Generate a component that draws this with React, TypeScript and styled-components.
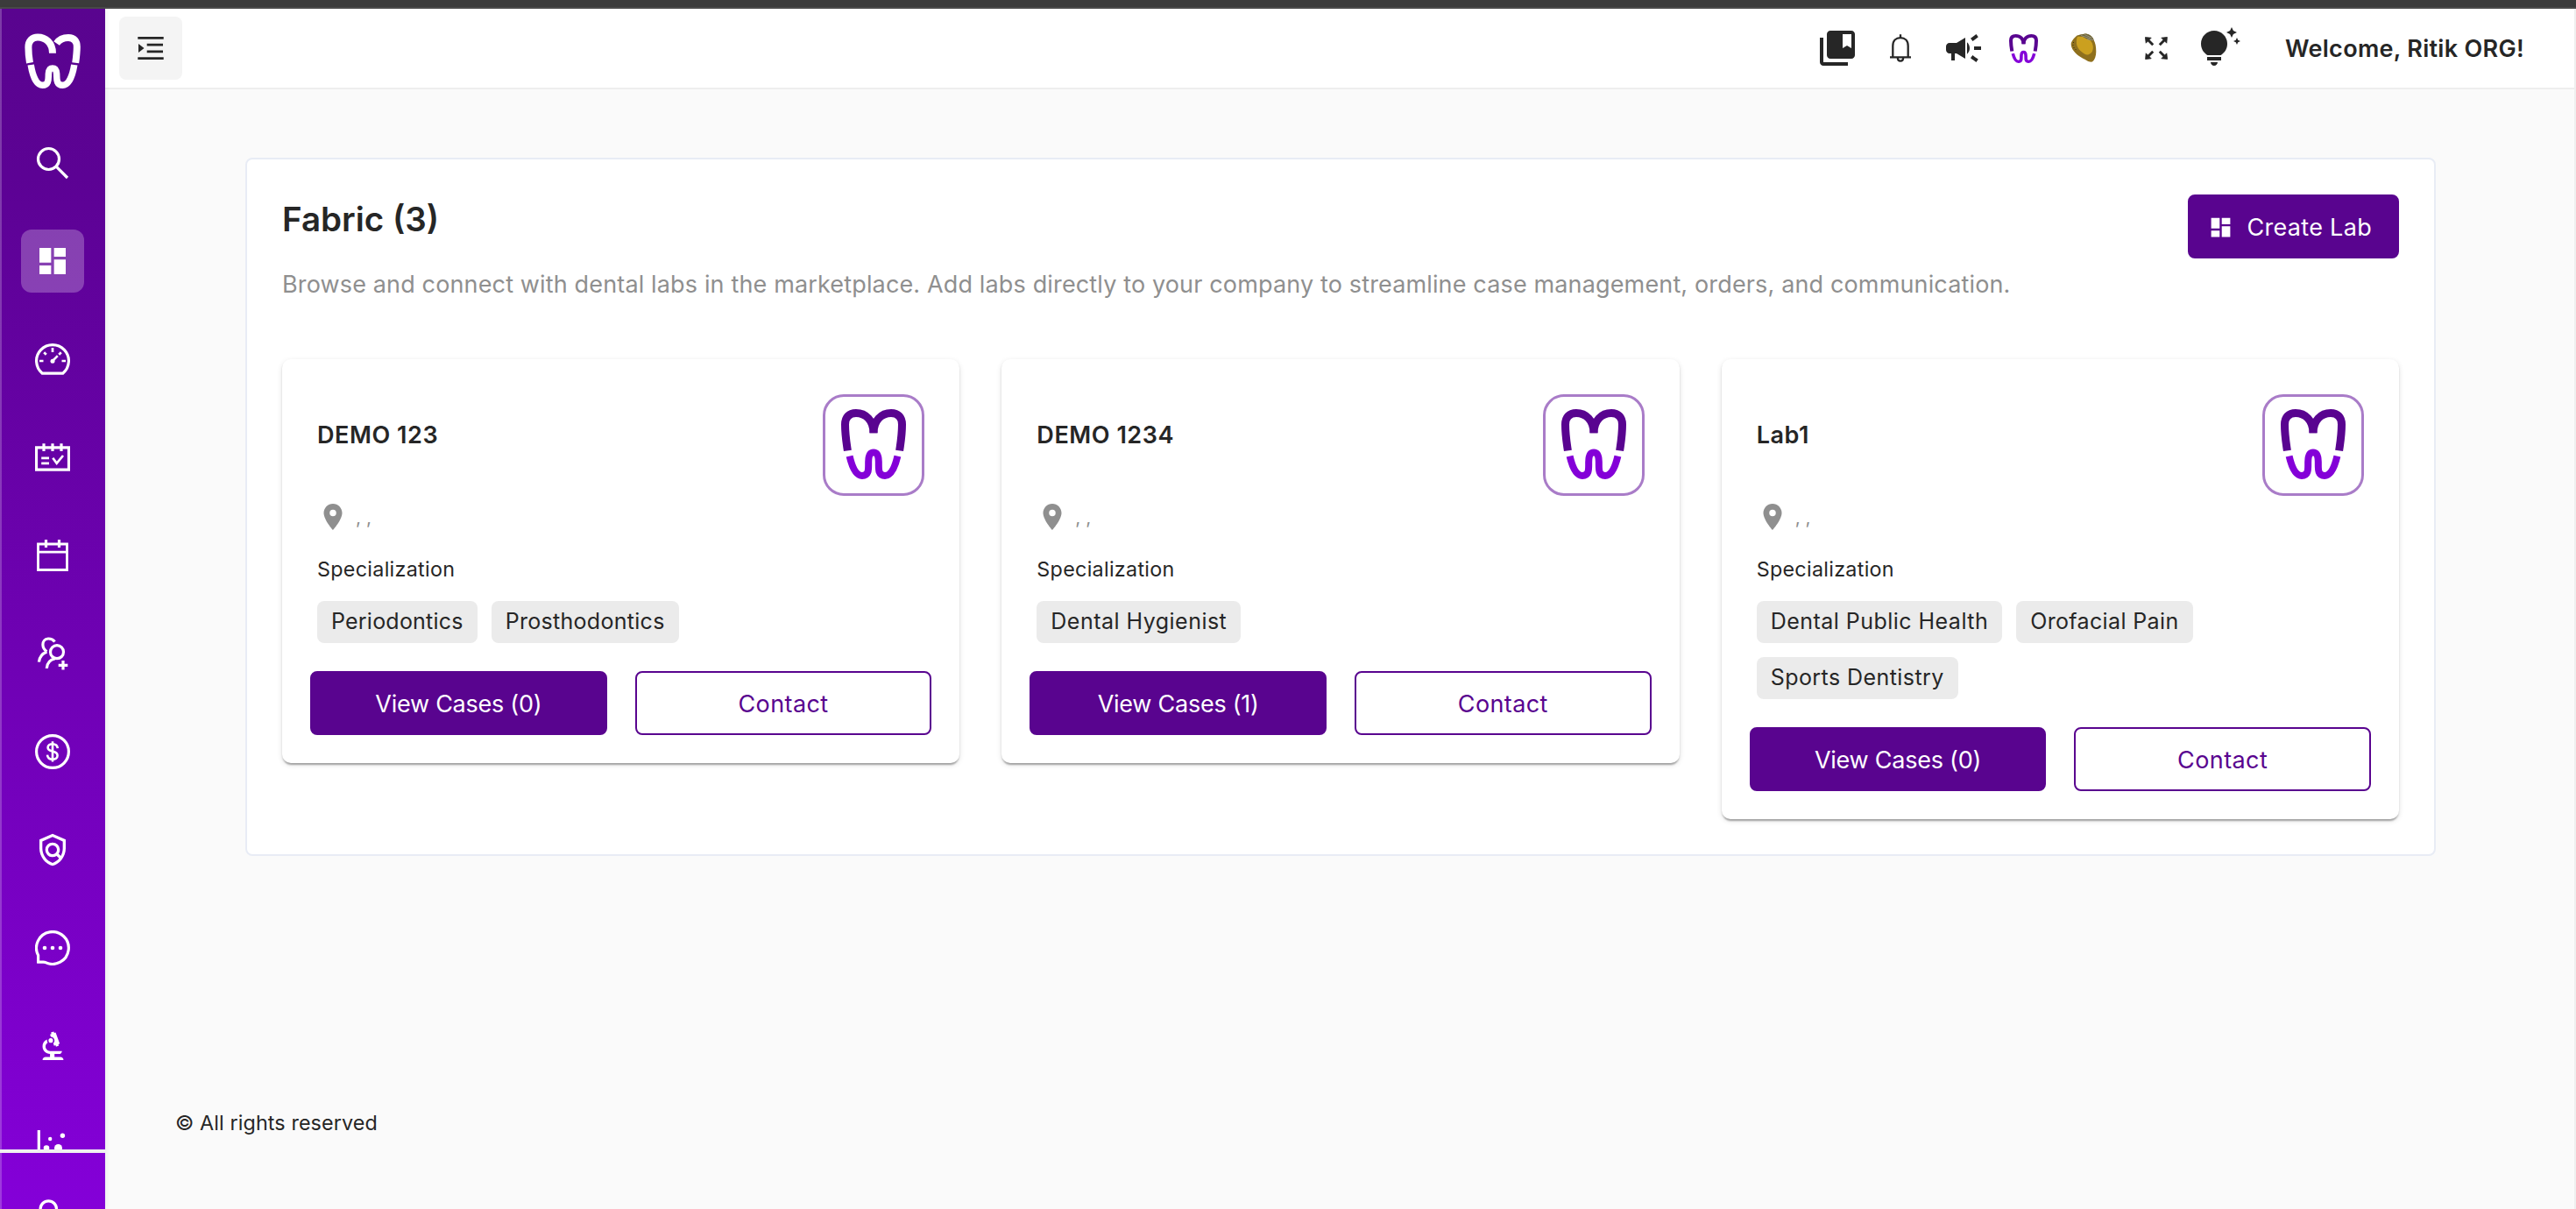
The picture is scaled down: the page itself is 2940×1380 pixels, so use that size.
import React from "react";
import styled, { createGlobalStyle, css } from "styled-components";
import {
  MdCampaign,
  MdCollectionsBookmark,
  MdDashboard,
  MdBiotech,
  MdLocationOn,
  MdOutlinePolicy,
  MdTipsAndUpdates,
} from "react-icons/md";

const brand = "#59048f";
const ink = "#262626";
const muted = "#8f8f8f";

const GlobalStyle = createGlobalStyle`
  *, *::before, *::after { box-sizing: border-box; }
  html, body { margin: 0; background: #fafafa; }
  body { font-family: Inter, "Open Sans", sans-serif; color: ${ink}; }
  svg { display: block; flex: none; }
  h1, h2, p { margin: 0; font-weight: 400; }
  button { font: inherit; margin: 0; cursor: pointer; }
`;

const Page = styled.div`
  display: flex;
  flex-direction: column;
  width: 100%;
  height: 1380px;
  overflow: hidden;
`;

const WindowEdge = styled.div`
  flex: none;
  height: 10px;
  background: #3b3b3b;
  border-bottom: 2px solid #4a4a4a;
`;

const Shell = styled.div`
  flex: 1;
  min-height: 0;
  display: flex;
`;

/* ---------- sidebar ---------- */

const Sidebar = styled.aside`
  position: relative;
  flex: none;
  width: 120px;
  display: flex;
  flex-direction: column;
  background: linear-gradient(180deg, #59048f 0%, #5c0294 14%, #8400d8 100%);
  box-shadow: inset 2px 0 rgba(255, 255, 255, 0.22), 2px 0 6px rgba(0, 0, 0, 0.05);
`;

const Brand = styled.div`
  flex: none;
  display: flex;
  justify-content: center;
  padding: 28px 0 48px;
`;

const Nav = styled.nav`
  flex: 1;
  min-height: 0;
  overflow: hidden;
  display: flex;
  flex-direction: column;
  align-items: center;
  gap: 40px;
`;

const NavItem = styled.a<{ $active?: boolean }>`
  flex: none;
  width: 72px;
  height: 72px;
  display: flex;
  align-items: center;
  justify-content: center;
  border-radius: 12px;
  color: #fff;
  ${(p) => p.$active && css`background: rgba(255, 255, 255, 0.25);`}
`;

const NavFooter = styled.div`
  flex: none;
  height: 68px;
  overflow: hidden;
  display: flex;
  justify-content: center;
  padding-top: 51px;
  border-top: 4px solid #f0f0f0;
  color: #fff;
`;

/* ---------- header ---------- */

const Content = styled.div`
  flex: 1;
  min-width: 0;
  display: flex;
  flex-direction: column;
  border-right: 2px solid #efefef;
`;

const Header = styled.header`
  flex: none;
  height: 92px;
  display: flex;
  align-items: center;
  justify-content: space-between;
  padding: 0 59px 0 16px;
  background: #fff;
  border-bottom: 2px solid #eeeeee;
`;

const MenuButton = styled.button`
  width: 72px;
  height: 72px;
  display: flex;
  align-items: center;
  justify-content: center;
  padding: 0;
  border: 0;
  border-radius: 8px;
  background: #f4f4f4;
  color: ${ink};
`;

const HeaderActions = styled.div`
  display: flex;
  align-items: center;
`;

const Action = styled.span<{ $width: number }>`
  width: ${(p) => p.$width}px;
  height: 48px;
  display: flex;
  align-items: center;
  justify-content: center;
`;

const Welcome = styled.span`
  width: 271px;
  margin-left: 49px;
  padding-top: 1px;
  font-size: 27px;
  line-height: 36px;
  font-weight: 560;
  letter-spacing: 0.3px;
  white-space: nowrap;
`;

/* ---------- main ---------- */

const Main = styled.main`
  flex: 1;
  min-height: 0;
  display: flex;
  flex-direction: column;
  padding: 78px 158px 82px 160px;
`;

const Panel = styled.section`
  padding: 40px;
  background: #fff;
  border: 2px solid #e8ecf5;
  border-radius: 8px;
`;

const PanelHead = styled.div`
  display: flex;
  justify-content: space-between;
  align-items: flex-start;
  margin-bottom: 67px;
`;

const Title = styled.h1`
  margin-bottom: 29px;
  font-size: 38.5px;
  line-height: 56px;
  font-weight: 560;
`;

const Subtitle = styled.p`
  font-size: 27px;
  line-height: 36px;
  letter-spacing: 0.145px;
  color: ${muted};
`;

const Button = styled.button<{ $outline?: boolean; $tracking?: number }>`
  height: 73px;
  display: flex;
  align-items: center;
  justify-content: center;
  gap: 16px;
  padding: 1px 33px 0 23px;
  border: 2px solid ${brand};
  border-radius: 8px;
  background: ${(p) => (p.$outline ? "#fff" : brand)};
  color: ${(p) => (p.$outline ? brand : "#fff")};
  font-size: 27px;
  line-height: 36px;
  letter-spacing: ${(p) => p.$tracking ?? 0}px;
  white-space: nowrap;
`;

const CreateButton = styled(Button)`
  padding: 2px 29px 0 21px;
`;

const LabGrid = styled.div`
  display: grid;
  grid-template-columns: repeat(3, 1fr);
  align-items: start;
  gap: 48px;
`;

const Card = styled.article`
  padding: 40px 32px 32px;
  background: #fff;
  border-radius: 10px;
  box-shadow: 0 4px 2px -2px rgba(0, 0, 0, 0.2), 0 2px 2px rgba(0, 0, 0, 0.14),
    0 2px 6px rgba(0, 0, 0, 0.12);
`;

const CardBody = styled.div`
  padding: 0 8px;
`;

const CardTop = styled.div`
  display: flex;
  justify-content: space-between;
  align-items: flex-start;
`;

const LabName = styled.h2`
  padding-top: 29px;
  font-size: 27px;
  line-height: 36px;
  font-weight: 570;
  letter-spacing: 0.55px;
`;

const LogoBox = styled.div`
  width: 116px;
  height: 116px;
  display: flex;
  justify-content: center;
  padding-top: 14px;
  border: 3px solid #a97cc8;
  border-radius: 24px;
`;

const Location = styled.div`
  display: flex;
  align-items: center;
  gap: 8px;
  height: 36px;
  margin-top: 6px;
  font-size: 21px;
  color: ${muted};
`;

const Label = styled.p`
  margin-top: 26px;
  font-size: 23.3px;
  line-height: 32px;
  letter-spacing: 0.3px;
`;

const Chips = styled.div`
  display: flex;
  flex-wrap: wrap;
  gap: 16px;
  margin: 20px 0 32px;
`;

const Chip = styled.span<{ $tracking: number }>`
  height: 48px;
  padding: 0 16px 2px;
  border-radius: 8px;
  background: #ebebeb;
  font-size: 25px;
  line-height: 46px;
  letter-spacing: ${(p) => p.$tracking}px;
`;

const CardActions = styled.div`
  display: grid;
  grid-template-columns: 1fr 1fr;
  gap: 32px;

  ${Button} {
    padding: 2px 0 0;
  }
`;

const Footer = styled.footer`
  margin: auto 0 0 -80px;
  font-size: 23.3px;
  line-height: 33px;
  letter-spacing: 0.12px;
`;

/* ---------- drawings ---------- */

const LineIcon = ({ children, size = 40, stroke = 3.2 }: { children: React.ReactNode; size?: number; stroke?: number }) => (
  <svg width={size} height={size} viewBox="0 0 40 40" fill="none" stroke="currentColor" strokeWidth={stroke}>
    {children}
  </svg>
);

const WhiteTooth = () => (
  <svg width="64" height="64" viewBox="0 0 64 64" fill="none" stroke="#fff" strokeWidth="8">
    <path d="M6 33.7C5 28 4.4 22 4.4 16C4.4 8.5 9 4.4 15 4.4C24 4.4 32 11 32 22.7" />
    <path d="M36.6 11.5C40 6.5 44.5 5 50 5C56.5 5 59.8 8.5 59.8 15.5C59.8 22 59 28 58.2 33.7" />
    <path d="M7.2 36C9 47 13 59.3 20.5 59.3C28.5 59.3 27 51 27.4 46C27.8 41.5 29 40 32 40C35 40 36.2 41.5 36.6 46C37 51 35.5 59.3 43.5 59.3C51 59.3 55 47 56.8 36" strokeWidth="7.5" />
  </svg>
);

const Tooth = ({ width, height }: { width: number; height: number }) => (
  <svg width={width} height={height} viewBox="0 0 74 80" preserveAspectRatio="none" fill="none" strokeWidth="9">
    <g stroke="#590490">
      <path d="M7.4 47.4C5.6 36 4.5 26 4.5 17.5C4.5 9 9 4.5 17 4.5C28 4.5 37 13 37 27.3" />
      <path d="M66.6 47.4C68.400 36 69.5 26 69.5 17.5C69.5 9 65 4.5 57 4.5C46 4.5 37 13 37 27.3" />
    </g>
    <path
      stroke="#8400d8"
      strokeWidth="8"
      d="M9.6 53.7C12 64 16 76 24 76C32.5 76 31 67 31.2 60C31.4 52 33 49.6 37 49.6C41 49.6 42.6 52 42.8 60C43 67 41.5 76 50 76C58 76 62 64 64.4 53.7"
    />
  </svg>
);

const Mango = () => (
  <svg width="30" height="34" viewBox="0 0 30 34">
    <path d="M7.5 2.5L17 .5C22 1 25 3.5 26.5 7.5C28.5 11 29.3 15 29.3 21C29.2 26 28 30 25 32.6C22.5 33 20.5 32.2 18.5 31C13 28 7 25 4 20.5C1.5 17.5 .3 14 .8 11C2 8 4.5 5 7.5 2.5Z" fill="#8f701d" />
    <path d="M8 4C13 3 19 5 23 8.5C26 12 26.5 17 25 20.5C23 24 19.5 25.5 16 23.5C11 20.5 7.5 16.5 7 11.5C6.8 8.5 7 6 8 4Z" fill="#cba01f" />
    <path d="M8 2.3L17 .4C22 .8 26 4 26.8 8.2C22 8 18 6.5 14.5 4C12 3 10 2.8 8 2.3Z" fill="#6f6537" />
    <path d="M12 2.5L23 6M16 1.5L25 5.5M19 6.8L26.5 7.6" stroke="#9a9684" strokeWidth=".9" />
    <path d="M3 13v1M4 16v1M3.5 10v1M6 18v1" stroke="#3d3413" strokeWidth="1" />
  </svg>
);

const MenuUnfold = () => (
  <svg width="30" height="26" viewBox="0 0 30 26" fill="currentColor">
    <path d="M.3 0H29.7V2.7H.3zM10.7 7.8H29V10.5H10.7zM10.7 15.5H29V18.2H10.7zM.3 23.3H29.7V26H.3zM1 8L7.5 13L1 18z" />
  </svg>
);

const Bell = () => (
  <svg width="24" height="32" viewBox="0 0 24 32" fill="none" stroke={ink} strokeWidth="2.3">
    <path d="M3.3 26V13.5C3.3 7.5 6.8 4.2 12 4.2S20.7 7.5 20.7 13.5V26M0 26.3H24" />
    <path d="M12 .3V4M8.8 26.5C8.8 32 15.2 32 15.2 26.5" />
  </svg>
);

const Expand = () => (
  <svg width="26" height="26" viewBox="0 0 26 26" fill={ink} stroke={ink}>
    {[0, 90, 180, 270].map((a) => (
      <g key={a} transform={`rotate(${a} 13 13)`}>
        <path d="M.4 .6L7.2 1.2L1.2 7.2Z" strokeWidth=".8" strokeLinejoin="round" />
        <path d="M3 3L9.2 9.2" strokeWidth="2.9" />
      </g>
    ))}
  </svg>
);

const SearchIcon = () => (
  <LineIcon>
    <circle cx="15.5" cy="15.5" r="12" />
    <path d="M24.2 24.2L37 37" />
  </LineIcon>
);

const GaugeIcon = () => (
  <LineIcon>
    <path d="M8.3 36.2A18.4 18.4 0 1 1 31.7 36.2Z" />
    <path d="M20 7V12M5 22H9.5M30.5 22H35M10.2 12.2L12.8 14.8M29.8 12.2L27.2 14.8" strokeWidth="2.7" />
    <path d="M20 22L25.8 16.2" strokeWidth="2.6" />
    <circle cx="20" cy="22.2" r="2.5" fill="currentColor" stroke="none" />
  </LineIcon>
);

const ScheduleIcon = () => (
  <LineIcon>
    <path d="M1.5 8.8H38.5V34.2H1.5Z" />
    <path d="M10 4.2V13M20 4.2V13M30 4.2V13" />
    <path d="M7.2 20.8H16M7.2 26.8H16M20.3 20.8L24.7 26.8L32 18" strokeWidth="2.7" />
  </LineIcon>
);

const CalendarIcon = () => (
  <LineIcon>
    <path d="M3.5 7H36.5V36.5H3.5ZM3.5 16.2H36.5" strokeWidth="2.8" />
    <path d="M12.5 2V11M27.5 2V11" />
  </LineIcon>
);

const AddUserIcon = () => (
  <LineIcon>
    <circle cx="25" cy="18.2" r="7.5" />
    <path d="M13.3 37C13.6 31 17 27 23 25.8" />
    <path d="M22.5 6.5C20.5 3.8 17.8 2.9 15 3C11 3.3 8.8 6.5 8.9 10C9 13 10.5 15.6 13.3 17.8" />
    <path d="M4.4 29.7C5 24 8 20 13.5 18" />
    <path d="M32 28V38.6M26.7 33.3H37.3" />
  </LineIcon>
);

const DollarIcon = () => (
  <LineIcon>
    <circle cx="20" cy="20" r="18.4" />
    <path d="M25.8 16.2C25.5 12.6 23 11.2 20 11.2C16.8 11.2 14.6 12.9 14.6 15.3C14.6 18 17 18.9 20 19.6C23.2 20.4 25.6 21.5 25.6 24.5C25.6 27.2 23.2 28.8 20 28.8C16.7 28.8 14.3 27 14 23.7M20 8.2V31.6" strokeWidth="2.6" />
  </LineIcon>
);

const ChatIcon = () => (
  <LineIcon>
    <path d="M3.6 37.5V28.5A18.4 18.4 0 1 1 12 36.6C10.8 36.1 10.3 36.1 9.5 36.1H2.5" />
    <g fill="currentColor" stroke="none">
      <circle cx="11" cy="20" r="2.3" />
      <circle cx="20" cy="20" r="2.3" />
      <circle cx="29" cy="20" r="2.3" />
    </g>
  </LineIcon>
);

const ScatterIcon = () => (
  <LineIcon>
    <path d="M4.3 4V36H37" />
    <g fill="currentColor" stroke="none">
      <circle cx="17.2" cy="14" r="2.2" />
      <circle cx="31.4" cy="10.2" r="2.7" />
      <circle cx="13" cy="24.5" r="3.3" />
      <circle cx="26.5" cy="24.5" r="4.5" />
    </g>
  </LineIcon>
);

const ProfileIcon = () => (
  <LineIcon>
    <circle cx="15.3" cy="13" r="9.2" />
  </LineIcon>
);

const navItems: { name: string; icon: React.ReactNode; active?: boolean }[] = [
  { name: "search", icon: <SearchIcon /> },
  { name: "dashboard", icon: <MdDashboard size={40} />, active: true },
  { name: "performance", icon: <GaugeIcon /> },
  { name: "schedule", icon: <ScheduleIcon /> },
  { name: "calendar", icon: <CalendarIcon /> },
  { name: "patients", icon: <AddUserIcon /> },
  { name: "billing", icon: <DollarIcon /> },
  { name: "policy", icon: <MdOutlinePolicy size={40} /> },
  { name: "chat", icon: <ChatIcon /> },
  { name: "labs", icon: <MdBiotech size={41} /> },
  { name: "reports", icon: <ScatterIcon /> },
];

type Lab = { name: string; cases: number; tags: [string, number][] };

const labs: Lab[] = [
  { name: "DEMO 123", cases: 0, tags: [["Periodontics", 0.22], ["Prosthodontics", 0.29]] },
  { name: "DEMO 1234", cases: 1, tags: [["Dental Hygienist", 0.48]] },
  { name: "Lab1", cases: 0, tags: [["Dental Public Health", 0.47], ["Orofacial Pain", 0.36], ["Sports Dentistry", 0.44]] },
];

const LabCard = ({ lab }: { lab: Lab }) => (
  <Card>
    <CardBody>
      <CardTop>
        <LabName>{lab.name}</LabName>
        <LogoBox>
          <Tooth width={74} height={80} />
        </LogoBox>
      </CardTop>
      <Location>
        <MdLocationOn size={36} />
        <span>, ,</span>
      </Location>
      <Label>Specialization</Label>
      <Chips>
        {lab.tags.map(([tag, tracking]) => (
          <Chip key={tag} $tracking={tracking}>{tag}</Chip>
        ))}
      </Chips>
    </CardBody>
    <CardActions>
      <Button $tracking={-0.25}>View Cases ({lab.cases})</Button>
      <Button $outline $tracking={0.4}>Contact</Button>
    </CardActions>
  </Card>
);

export default function App() {
  return (
    <>
      <GlobalStyle />
      <Page>
        <WindowEdge />
        <Shell>
          <Sidebar>
            <Brand>
              <WhiteTooth />
            </Brand>
            <Nav>
              {navItems.map((item) => (
                <NavItem key={item.name} $active={item.active}>{item.icon}</NavItem>
              ))}
            </Nav>
            <NavFooter>
              <ProfileIcon />
            </NavFooter>
          </Sidebar>
          <Content>
            <Header>
              <MenuButton>
                <MenuUnfold />
              </MenuButton>
              <HeaderActions>
                <Action $width={72}><MdCollectionsBookmark size={48} color={ink} /></Action>
                <Action $width={72}><Bell /></Action>
                <Action $width={72}><MdCampaign size={48} color={ink} /></Action>
                <Action $width={64}><Tooth width={33} height={33} /></Action>
                <Action $width={74}><Mango /></Action>
                <Action $width={92}><Expand /></Action>
                <Action $width={52}><MdTipsAndUpdates size={48} color={ink} /></Action>
                <Welcome>Welcome, Ritik ORG!</Welcome>
              </HeaderActions>
            </Header>
            <Main>
              <Panel>
                <PanelHead>
                  <div>
                    <Title>Fabric (3)</Title>
                    <Subtitle>
                      Browse and connect with dental labs in the marketplace. Add labs directly to your company to
                      streamline case management, orders, and communication.
                    </Subtitle>
                  </div>
                  <CreateButton $tracking={0.3}>
                    <MdDashboard size={29} />
                    Create Lab
                  </CreateButton>
                </PanelHead>
                <LabGrid>
                  {labs.map((lab) => (
                    <LabCard key={lab.name} lab={lab} />
                  ))}
                </LabGrid>
              </Panel>
              <Footer>© All rights reserved</Footer>
            </Main>
          </Content>
        </Shell>
      </Page>
    </>
  );
}
